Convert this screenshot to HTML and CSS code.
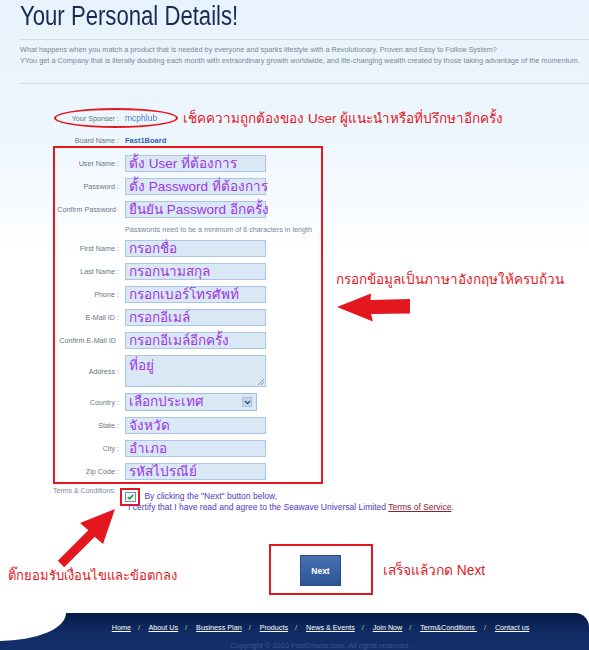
FILE: index.html
```html
<!DOCTYPE html>
<html lang="en">
<head>
    <meta charset="UTF-8">
    <title>Your Personal Details!</title>
    <link rel="stylesheet" href="styles.css">
</head>
<body>
    <header class="page-head">
        <h1>Your Personal Details!</h1>
        <div class="intro">
            <p>What happens when you match a product that is needed by everyone and sparks lifestyle with a Revolutionary, Proven and Easy to Follow System?</p>
            <p>YYou get a Company that is literally doubling each month with extraordinary growth worldwide, and life-changing wealth created by those taking advantage of the momentum.</p>
        </div>
    </header>

    <div class="signup">
        <div class="info-row sponsor">
            <span class="label">Your Sponser :</span>
            <span class="blur-name">mcphlub</span>
            <span class="red-note">เช็คความถูกต้องของ User ผู้แนะนำหรือที่ปรึกษาอีกครั้ง</span>
        </div>
        <div class="info-row board">
            <span class="label">Board Name :</span>
            <span class="board-name">Fast1Board</span>
        </div>

        <div class="details-wrap">
            <div class="details">
                <div class="row"><span class="label">User Name :</span><div class="field">ตั้ง User ที่ต้องการ</div></div>
                <div class="row"><span class="label">Password :</span><div class="field">ตั้ง Password ที่ต้องการ</div></div>
                <div class="row"><span class="label no-colon">Confirm Password</span><div class="field">ยืนยัน Password อีกครั้ง</div></div>
                <div class="row hint-row"><span class="label"></span><span class="hint">Passwords need to be a minimum of 6 characters in length</span></div>
                <div class="row"><span class="label">First Name :</span><div class="field">กรอกชื่อ</div></div>
                <div class="row"><span class="label">Last Name :</span><div class="field">กรอกนามสกุล</div></div>
                <div class="row"><span class="label">Phone :</span><div class="field">กรอกเบอร์โทรศัพท์</div></div>
                <div class="row"><span class="label">E-Mail ID :</span><div class="field">กรอกอีเมล์</div></div>
                <div class="row"><span class="label no-colon">Confirm E-Mail ID</span><div class="field">กรอกอีเมล์อีกครั้ง</div></div>
                <div class="row area-row"><span class="label">Address :</span><div class="field area">ที่อยู่</div></div>
                <div class="row"><span class="label">Country :</span>
                    <div class="field select">เลือกประเทศ
                        <span class="drop">
                            <svg width="7" height="5" viewBox="0 0 7 5"><path d="M1 1 L3.5 3.5 L6 1" fill="none" stroke="#3a4f7a" stroke-width="1.4"/></svg>
                        </span>
                    </div>
                </div>
                <div class="row"><span class="label">State :</span><div class="field">จังหวัด</div></div>
                <div class="row"><span class="label">City :</span><div class="field">อำเภอ</div></div>
                <div class="row"><span class="label">Zip Code :</span><div class="field">รหัสไปรณีย์</div></div>
            </div>

            <div class="side-note">
                <p class="red-note">กรอกข้อมูลเป็นภาษาอังกฤษให้ครบถ้วน</p>
                <svg class="left-arrow" width="76" height="31" viewBox="0 0 76 31">
                    <polygon points="1,15 35,1.5 34.5,8 74,7 74,21.5 35,22 37,29.5" fill="#e3171d"/>
                </svg>
            </div>
        </div>

        <div class="terms">
            <span class="terms-label">Terms &amp; Conditions:</span>
            <div class="terms-text">
                <span class="check-wrap">
                    <svg width="11" height="10" viewBox="0 0 11 10">
                        <rect x="0.5" y="0.5" width="10" height="9" fill="#eef4fa" stroke="#6f8fb4"/>
                        <path d="M2.8 5 L4.6 6.9 L8.2 3" fill="none" stroke="#1f9a2a" stroke-width="1.6"/>
                    </svg>
                </span>
                <span class="by-click">By clicking the "Next" button below,</span><br>
                I certify that I have read and agree to the Seawave Universal Limited <a href="#">Terms of Service</a>.
            </div>
        </div>
    </div>

    <div class="submit-row">
        <svg class="tick-arrow" width="70" height="66" viewBox="0 0 70 66">
            <polygon points="65,4 53,39 44.7,31.7 14.2,62.2 7.8,55.8 38.3,25.3 30,18" fill="#e3171d"/>
        </svg>
        <p class="red-note tick-note">ติ๊กยอมรับเงื่อนไขและข้อตกลง</p>
        <div class="next-box">
            <button class="next-btn">Next</button>
        </div>
        <p class="red-note done-note">เสร็จแล้วกด Next</p>
    </div>

    <footer class="site-foot">
        <nav>
            <a href="#">Home</a><span>/</span>
            <a href="#">About Us</a><span>/</span>
            <a href="#">Business Plan</a><span>/</span>
            <a href="#">Products</a><span>/</span>
            <a href="#">News &amp; Events</a><span>/</span>
            <a href="#">Join Now</a><span>/</span>
            <a href="#">Term&amp;Conditions&nbsp;</a><span>/</span>
            <a href="#">Contact us</a>
        </nav>
        <p class="copy">Copyright © 2010 Fast2muris.com. All rights reserved.</p>
    </footer>
</body>
</html>
```

FILE: styles.css
```css
body {
    margin: 0;
    font-family: "Liberation Sans", Arial, sans-serif;
    background: linear-gradient(#e7f2fc 0, #edf6fd 130px, #fff 260px);
    background-repeat: no-repeat;
    color: #707c8a;
}

.page-head h1 {
    margin: 0 0 8px 20px;
    padding-top: 1px;
    font-size: 27px;
    line-height: 30px;
    font-weight: normal;
    color: #172a55;
    white-space: nowrap;
    transform: scaleX(0.82);
    transform-origin: left top;
}

.intro {
    margin-left: 20px;
    padding: 5px 0 17px;
    border-top: 1px solid #d3dae1;
    border-bottom: 1px solid #d3dae1;
}

    .intro p {
        margin: 0;
        font-size: 7.3px;
        line-height: 10.5px;
        color: #7c8797;
        white-space: nowrap;
    }

.signup {
    padding-left: 53px;
    margin-top: 25px;
}

.label {
    width: 64px;
    margin-right: 6px;
    flex: none;
    text-align: right;
    font-size: 7.2px;
    color: #6a7685;
    white-space: nowrap;
}

.info-row {
    display: flex;
    align-items: center;
    height: 18px;
}

    .info-row .label {
        width: 66px;
    }

.sponsor {
    position: relative;
}

    .sponsor::before {
        content: '';
        position: absolute;
        left: 1px;
        top: -1px;
        width: 120px;
        height: 16px;
        border: 2px solid #e3171d;
        border-radius: 50%;
    }

.blur-name {
    font-size: 8.5px;
    color: #4d7fd0;
    filter: blur(0.7px);
}

.red-note {
    margin: 0;
    color: #e3171d;
    font-size: 13.5px;
    white-space: nowrap;
}

.sponsor .red-note {
    margin-left: 26px;
}

.board {
    height: 12px;
    margin-top: 7px;
}

.board-name {
    font-size: 7.5px;
    font-weight: bold;
    color: #2b62b8;
}

.details-wrap {
    display: flex;
    align-items: flex-start;
}

.details {
    width: 266px;
    padding: 7px 0 2px;
    border: 2px solid #e3171d;
}

.row {
    display: flex;
    align-items: center;
    margin-bottom: 6px;
}

    .row:last-child {
        margin-bottom: 0;
    }

    .row .no-colon {
        width: 61px;
        margin-right: 9px;
    }

.field {
    position: relative;
    box-sizing: border-box;
    width: 141px;
    height: 17px;
    padding-left: 3px;
    border: 1px solid #a9c6e3;
    background: #dae8f6;
    color: #9b35e6;
    font-size: 13.5px;
    line-height: 15px;
    white-space: nowrap;
}

.area {
    height: 32px;
    line-height: 20px;
}

    .area::after {
        content: '';
        position: absolute;
        right: 1px;
        bottom: 1px;
        width: 6px;
        height: 6px;
        background: linear-gradient(135deg, transparent 45%, #8a96a4 45%, #8a96a4 55%, transparent 55%, transparent 70%, #8a96a4 70%, #8a96a4 80%, transparent 80%);
    }

.select {
    width: 132px;
    height: 18px;
    border-color: #9fbfe0;
}

.drop {
    position: absolute;
    right: 4px;
    top: 3px;
    width: 10px;
    height: 10px;
    display: flex;
    align-items: center;
    justify-content: center;
    background: #c2d6ee;
    border: 1px solid #a9c2de;
    box-sizing: border-box;
}

.hint-row {
    height: 10px;
}

.hint {
    font-size: 7.2px;
    color: #7a8898;
    white-space: nowrap;
}

.side-note {
    margin: 125px 0 0 13px;
}

    .side-note .red-note {
        line-height: 18px;
    }

.left-arrow {
    display: block;
    margin-top: 3px;
}

.terms {
    display: grid;
    grid-template-columns: 75px auto;
    margin-top: 1px;
}

.terms-label {
    font-size: 7px;
    line-height: 11px;
    color: #7c8797;
    white-space: nowrap;
}

.terms-text {
    margin-top: 6px;
    font-size: 8.5px;
    line-height: 11px;
    color: #5337c4;
    white-space: nowrap;
}

    .terms-text a {
        color: #8b2234;
    }

.check-wrap {
    display: inline-flex;
    align-items: center;
    justify-content: center;
    box-sizing: border-box;
    width: 20px;
    height: 18px;
    margin: -4px 2px -4px -8px;
    vertical-align: middle;
    border: 2px solid #e3171d;
}

.submit-row {
    position: relative;
    display: flex;
    align-items: center;
    margin-top: 31px;
    padding-left: 8px;
}

.tick-arrow {
    position: absolute;
    left: 50px;
    top: -39px;
}

.tick-note {
    width: 261px;
    margin-top: 12px;
    font-size: 13px;
}

.next-box {
    box-sizing: border-box;
    width: 104px;
    height: 51px;
    padding: 9px 0 0 29px;
    border: 2px solid #e3171d;
}

.next-btn {
    width: 41px;
    height: 31px;
    padding: 0;
    border: 1px solid #284a85;
    background: linear-gradient(#4670b0, #2d5595);
    color: #fff;
    font-family: "Liberation Sans", Arial, sans-serif;
    font-size: 8.5px;
    font-weight: bold;
}

.done-note {
    margin-left: 10px;
    font-size: 13.8px;
}

.site-foot {
    position: relative;
    margin-top: 18px;
    height: 60px;
    border-top-right-radius: 14px;
    background: linear-gradient(#061a45 0, #102a62 18px, #163573 50px);
    text-align: center;
}

    .site-foot::before {
        content: '';
        position: absolute;
        left: 0;
        top: 0;
        width: 66px;
        height: 28px;
        background: #fff;
        border-bottom-right-radius: 66px 28px;
    }

    .site-foot nav {
        padding: 10px 0 0 52px;
        font-size: 7.2px;
        line-height: 10px;
    }

    .site-foot a {
        color: #fff;
    }

    .site-foot nav span {
        margin: 0 7px;
        color: #d8c890;
    }

.copy {
    margin: 8px 0 0 52px;
    font-size: 7.5px;
    color: #3f5488;
}
```
